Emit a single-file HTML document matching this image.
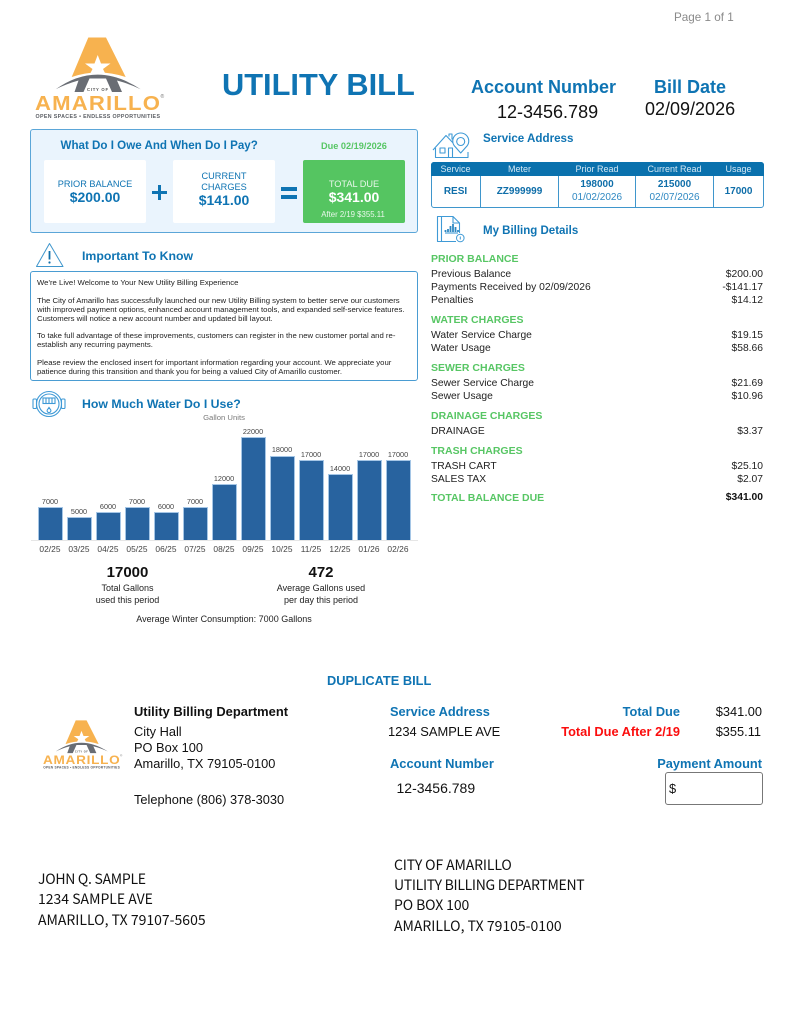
<!DOCTYPE html>
<html><head><meta charset="utf-8"><title>Utility Bill</title>
<style>
html,body{margin:0;padding:0;background:#fff}
#p{position:relative;width:791px;height:1024px;overflow:hidden;font-family:"Liberation Sans",Arial,sans-serif;color:#111;filter:blur(.3px)}
.t{position:absolute;white-space:nowrap;line-height:0}
.r{transform:translateX(-100%)}
.c{transform:translateX(-50%)}
.b{font-weight:700}
.bl{color:#0f74b3}
.g{color:#57c664;font-weight:700;font-size:10.5px;left:431px;margin-top:1px}
.d{font-size:10.3px;left:431px;color:#222;margin-top:1.5px}
.a{font-size:10.3px;left:763px;color:#222;transform:translateX(-100%);margin-top:1.5px}
.box{position:absolute;box-sizing:border-box}
.n{font-size:7.75px;left:37px;color:#222;margin-top:1px}
.th{font-size:9px;color:#d5e8f4;top:169px}
.tv{font-size:10px;color:#0f6ea9;font-weight:700}
.td{font-size:10px;color:#2f88c2}
.bar{position:absolute;width:25px;box-sizing:border-box;background:#28639f;border:1px solid #a5c6e6;border-bottom:0}
.v{font-size:7.3px;color:#444;margin-top:.5px}
.m{font-size:8.4px;color:#444;top:548.7px;letter-spacing:.05px}
.s{font-size:9px;color:#222}
.k{font-size:12.8px;color:#111}
.x{font-family:"Noto Sans CJK JP","Liberation Sans",sans-serif;font-size:14px;color:#111}
svg{position:absolute;left:0;top:0}
</style></head><body><div id="p">

<svg width="791" height="1024" viewBox="0 0 791 1024" fill="none">
  <!-- main logo -->
  <g>
    <path d="M88.3 37.5H106L125.7 77Q98 68 71.7 77Z" fill="#f7b24f"/>
    <path d="M97.7 55L101 63.5L110.5 63.5L103 69L106 75Q98 72.5 89.5 75L92.5 69L85 63.5L94.5 63.5Z" fill="#fff"/>
    <path d="M55.7 89.3Q97 60 140.7 89.3Q130 84 117 80.5L122 92H112L106 78.5H89.5L83.5 92H74.5L78.5 80.5Q66 84 55.7 89.3Z" fill="#696d74"/>
    <text x="87" y="91" font-size="4.2" font-weight="700" fill="#555" textLength="21" font-family="Liberation Sans">CITY OF</text>
    <text transform="translate(35 110) scale(1.08 1)" font-size="20.5" font-weight="700" fill="#f7b24f" textLength="115.7" font-family="Liberation Sans">AMARILLO</text>
    <text x="160.5" y="98" font-size="5" fill="#777" font-family="Liberation Sans">®</text>
    <text x="35.5" y="118" font-size="5.3" font-weight="700" fill="#5a5d63" textLength="124.5" font-family="Liberation Sans">OPEN SPACES • ENDLESS OPPORTUNITIES</text>
  </g>
  <!-- small logo -->
  <g transform="translate(21.5 697.9) scale(.614 .6)">
    <path d="M88.3 37.5H106L125.7 77Q98 68 71.7 77Z" fill="#f7b24f"/>
    <path d="M97.7 55L101 63.5L110.5 63.5L103 69L106 75Q98 72.5 89.5 75L92.5 69L85 63.5L94.5 63.5Z" fill="#fff"/>
    <path d="M55.7 89.3Q97 60 140.7 89.3Q130 84 117 80.5L122 92H112L106 78.5H89.5L83.5 92H74.5L78.5 80.5Q66 84 55.7 89.3Z" fill="#696d74"/>
    <text x="87" y="91" font-size="4.2" font-weight="700" fill="#555" textLength="21" font-family="Liberation Sans">CITY OF</text>
    <text transform="translate(35 110) scale(1.08 1)" font-size="20.5" font-weight="700" fill="#f7b24f" textLength="115.7" font-family="Liberation Sans">AMARILLO</text>
    <text x="160.5" y="98" font-size="5" fill="#777" font-family="Liberation Sans">®</text>
    <text x="35.5" y="118" font-size="5.3" font-weight="700" fill="#5a5d63" textLength="124.5" font-family="Liberation Sans">OPEN SPACES • ENDLESS OPPORTUNITIES</text>
  </g>
  <!-- warning icon -->
  <path d="M49.5 243.5L36.5 266.5H63Z" stroke="#3f96cc" stroke-width="1" stroke-linejoin="round"/>
  <path d="M49.5 251V259.5" stroke="#0f6ea9" stroke-width="1.8"/>
  <circle cx="49.5" cy="262.5" r="1.1" fill="#0f6ea9"/>
  <!-- meter icon -->
  <g stroke="#3f9ad6" stroke-width="1.1">
    <circle cx="49" cy="404" r="12.5"/><circle cx="49" cy="404" r="10"/>
    <rect x="43" y="398" width="12" height="5.5"/>
    <path d="M46 398v5.5M49 398v5.5M52 398v5.5"/>
    <rect x="33" y="399" width="3.5" height="9.5" rx="1"/><rect x="61.5" y="399" width="3.5" height="9.5" rx="1"/>
    <path d="M36.5 401h.5M36.5 406h.5M61 401h.5M61 406h.5"/>
    <path d="M49 407.5l1.8 2.6a1.9 1.9 0 1 1-3.6 0Z"/>
  </g>
  <!-- house icon -->
  <g stroke="#3f9ad6" stroke-width="1.1" stroke-linejoin="round">
    <path d="M433 150L446 135.5L456 146"/>
    <path d="M435.5 148V157.5H468V152"/>
    <path d="M449 136.5V134H452V139.5"/>
    <rect x="440" y="148" width="5" height="5"/>
    <path d="M448.5 157.5V148H452.5V157.5"/>
    <path d="M460.7 153L454.5 146A8 8 0 1 1 467 146Z" fill="#fff"/>
    <circle cx="460.7" cy="141.5" r="4"/>
  </g>
  <!-- document icon -->
  <g stroke="#3f9ad6" stroke-width="1.1" stroke-linejoin="round">
    <path d="M459.5 233V223L453 216.5H437.5V241.5H456"/>
    <path d="M441.5 216.5V241.5M453 216.5V223H459.5"/>
    <path d="M445 233H458"/>
  </g>
  <path d="M445.5 232v-2M448 232v-3M450.5 232v-6M453 232v-8M455.5 232v-5M458 232v-2" stroke="#2f88c2" stroke-width="1.8"/>
  <circle cx="460.3" cy="238" r="3.8" fill="#fff" stroke="#3f9ad6"/>
  <path d="M460.3 236.5v3" stroke="#3f9ad6"/>
  <!-- chart axis -->
  <path d="M31 540.5H418" stroke="#e6e6e6"/>
</svg>

<div class="t" style="left:674px;top:18px;font-size:11.7px;color:#8a8a8a">Page 1 of 1</div>
<div class="t b bl" style="left:222px;top:85px;font-size:30.8px">UTILITY BILL</div>
<div class="t b bl" style="left:471px;top:87px;font-size:18px">Account Number</div>
<div class="t b bl" style="left:654px;top:87px;font-size:18px">Bill Date</div>
<div class="t" style="left:497px;top:112px;font-size:18px">12-3456.789</div>
<div class="t" style="left:645px;top:109px;font-size:18px">02/09/2026</div>

<!-- owe box -->
<div class="box" style="left:30px;top:129px;width:388px;height:104px;background:#eaf4fd;border:1.5px solid #5ba6d8;border-radius:3px"></div>
<div class="t b bl" style="left:60.5px;top:146px;font-size:11.6px">What Do I Owe And When Do I Pay?</div>
<div class="t b" style="left:321px;top:146px;font-size:9.2px;color:#57c664">Due 02/19/2026</div>
<div class="box" style="left:44px;top:160px;width:102px;height:63px;background:#fff;border-radius:2px"></div>
<div class="box" style="left:173px;top:160px;width:102px;height:63px;background:#fff;border-radius:2px"></div>
<div class="box" style="left:303px;top:160px;width:102px;height:63px;background:#55c561;border-radius:2px"></div>
<div class="t c bl" style="left:95px;top:184px;font-size:9.2px">PRIOR BALANCE</div>
<div class="t c b bl" style="left:95px;top:197px;font-size:14px">$200.00</div>
<div class="t c bl" style="left:224px;top:176px;font-size:9.2px">CURRENT</div>
<div class="t c bl" style="left:224px;top:186.5px;font-size:9.2px">CHARGES</div>
<div class="t c b bl" style="left:224px;top:200px;font-size:14px">$141.00</div>
<div class="box" style="left:152px;top:190.5px;width:15px;height:3px;background:#0f74b3"></div>
<div class="box" style="left:158px;top:184.5px;width:3px;height:15.5px;background:#0f74b3"></div>
<div class="box" style="left:281px;top:187px;width:16px;height:4px;background:#0f74b3"></div>
<div class="box" style="left:281px;top:195px;width:16px;height:4px;background:#0f74b3"></div>
<div class="t c" style="left:354px;top:184px;font-size:9.2px;color:#e8f7ea">TOTAL DUE</div>
<div class="t c b" style="left:354px;top:197px;font-size:14px;color:#fff">$341.00</div>
<div class="t c" style="left:353px;top:215px;font-size:7.8px;color:#e8f7ea">After 2/19 $355.11</div>

<!-- important -->
<div class="t b bl" style="left:82px;top:255.5px;font-size:12.3px">Important To Know</div>
<div class="box" style="left:30px;top:271px;width:388px;height:110px;border:1.2px solid #4a9cd2;border-radius:3px"></div>
<div class="t n" style="top:281.5px">We're Live! Welcome to Your New Utility Billing Experience</div>
<div class="t n" style="top:299.5px">The City of Amarillo has successfully launched our new Utility Billing system to better serve our customers</div>
<div class="t n" style="top:308.5px">with improved payment options, enhanced account management tools, and expanded self-service features.</div>
<div class="t n" style="top:317.5px">Customers will notice a new account number and updated bill layout.</div>
<div class="t n" style="top:335px">To take full advantage of these improvements, customers can register in the new customer portal and re-</div>
<div class="t n" style="top:344px">establish any recurring payments.</div>
<div class="t n" style="top:361.5px">Please review the enclosed insert for important information regarding your account. We appreciate your</div>
<div class="t n" style="top:370.5px">patience during this transition and thank you for being a valued City of Amarillo customer.</div>

<!-- chart -->
<div class="t b bl" style="left:82px;top:404px;font-size:12.3px">How Much Water Do I Use?</div>
<div class="t c" style="left:224px;top:418px;font-size:7.7px;color:#7a7a7a">Gallon Units</div>

<div class="bar" style="left:37.5px;top:507px;height:33px"></div><div class="t c v" style="left:50px;top:501px">7000</div><div class="t c m" style="left:50px">02/25</div>
<div class="bar" style="left:66.5px;top:516.5px;height:23.5px"></div><div class="t c v" style="left:79px;top:511px">5000</div><div class="t c m" style="left:79px">03/25</div>
<div class="bar" style="left:95.5px;top:512px;height:28px"></div><div class="t c v" style="left:108px;top:506px">6000</div><div class="t c m" style="left:108px">04/25</div>
<div class="bar" style="left:124.5px;top:507px;height:33px"></div><div class="t c v" style="left:137px;top:501px">7000</div><div class="t c m" style="left:137px">05/25</div>
<div class="bar" style="left:153.5px;top:512px;height:28px"></div><div class="t c v" style="left:166px;top:506px">6000</div><div class="t c m" style="left:166px">06/25</div>
<div class="bar" style="left:182.5px;top:507px;height:33px"></div><div class="t c v" style="left:195px;top:501px">7000</div><div class="t c m" style="left:195px">07/25</div>
<div class="bar" style="left:211.5px;top:483.5px;height:56.5px"></div><div class="t c v" style="left:224px;top:478px">12000</div><div class="t c m" style="left:224px">08/25</div>
<div class="bar" style="left:240.5px;top:436.5px;height:103.5px"></div><div class="t c v" style="left:253px;top:431px">22000</div><div class="t c m" style="left:253px">09/25</div>
<div class="bar" style="left:269.5px;top:455.5px;height:84.5px"></div><div class="t c v" style="left:282px;top:449.5px">18000</div><div class="t c m" style="left:282px">10/25</div>
<div class="bar" style="left:298.5px;top:460px;height:80px"></div><div class="t c v" style="left:311px;top:454.5px">17000</div><div class="t c m" style="left:311px">11/25</div>
<div class="bar" style="left:327.5px;top:474px;height:66px"></div><div class="t c v" style="left:340px;top:468.5px">14000</div><div class="t c m" style="left:340px">12/25</div>
<div class="bar" style="left:356.5px;top:460px;height:80px"></div><div class="t c v" style="left:369px;top:454.5px">17000</div><div class="t c m" style="left:369px">01/26</div>
<div class="bar" style="left:385.5px;top:460px;height:80px"></div><div class="t c v" style="left:398px;top:454.5px">17000</div><div class="t c m" style="left:398px">02/26</div>

<div class="t c b" style="left:127.5px;top:573px;font-size:15px">17000</div>
<div class="t c s" style="left:127.5px;top:587.5px">Total Gallons</div>
<div class="t c s" style="left:127.5px;top:600px">used this period</div>
<div class="t c b" style="left:321px;top:573px;font-size:15px">472</div>
<div class="t c s" style="left:321px;top:587.5px">Average Gallons used</div>
<div class="t c s" style="left:321px;top:600px">per day this period</div>
<div class="t c s" style="left:224px;top:619px">Average Winter Consumption: 7000 Gallons</div>

<!-- right column -->
<div class="t b bl" style="left:483px;top:138.5px;font-size:11.6px">Service Address</div>
<div class="box" style="left:431px;top:161.5px;width:333px;height:46px;border:1.5px solid #3f96cc;border-radius:3px"></div>
<div class="box" style="left:431px;top:161.5px;width:333px;height:14.5px;background:#0a71ad;border-radius:3px 3px 0 0"></div>
<div class="box" style="left:480.3px;top:176px;width:1.2px;height:31px;background:#3f96cc"></div>
<div class="box" style="left:558px;top:176px;width:1.2px;height:31px;background:#3f96cc"></div>
<div class="box" style="left:635.3px;top:176px;width:1.2px;height:31px;background:#3f96cc"></div>
<div class="box" style="left:713px;top:176px;width:1.2px;height:31px;background:#3f96cc"></div>
<div class="t c th" style="left:455.5px">Service</div>
<div class="t c th" style="left:519.5px">Meter</div>
<div class="t c th" style="left:597px">Prior Read</div>
<div class="t c th" style="left:674.5px">Current Read</div>
<div class="t c th" style="left:738.5px">Usage</div>
<div class="t c tv" style="left:455.5px;top:191.5px">RESI</div>
<div class="t c tv" style="left:519.5px;top:191.5px">ZZ999999</div>
<div class="t c tv" style="left:597px;top:185px">198000</div>
<div class="t c td" style="left:597px;top:198px">01/02/2026</div>
<div class="t c tv" style="left:674.5px;top:185px">215000</div>
<div class="t c td" style="left:674.5px;top:198px">02/07/2026</div>
<div class="t c tv" style="left:738.5px;top:191.5px">17000</div>
<div class="t b bl" style="left:483px;top:230.5px;font-size:11.5px">My Billing Details</div>

<div class="t g" style="top:258px">PRIOR BALANCE</div>
<div class="t d" style="top:273.3px">Previous Balance</div><div class="t a" style="top:273.3px">$200.00</div>
<div class="t d" style="top:286.3px">Payments Received by 02/09/2026</div><div class="t a" style="top:286.3px">-$141.17</div>
<div class="t d" style="top:299px">Penalties</div><div class="t a" style="top:299px">$14.12</div>
<div class="t g" style="top:319px">WATER CHARGES</div>
<div class="t d" style="top:334px">Water Service Charge</div><div class="t a" style="top:334px">$19.15</div>
<div class="t d" style="top:347px">Water Usage</div><div class="t a" style="top:347px">$58.66</div>
<div class="t g" style="top:366.5px">SEWER CHARGES</div>
<div class="t d" style="top:382px">Sewer Service Charge</div><div class="t a" style="top:382px">$21.69</div>
<div class="t d" style="top:395px">Sewer Usage</div><div class="t a" style="top:395px">$10.96</div>
<div class="t g" style="top:414.5px">DRAINAGE CHARGES</div>
<div class="t d" style="top:430px">DRAINAGE</div><div class="t a" style="top:430px">$3.37</div>
<div class="t g" style="top:449.5px">TRASH CHARGES</div>
<div class="t d" style="top:465px">TRASH CART</div><div class="t a" style="top:465px">$25.10</div>
<div class="t d" style="top:478px">SALES TAX</div><div class="t a" style="top:478px">$2.07</div>
<div class="t g" style="top:497px">TOTAL BALANCE DUE</div><div class="t a b" style="top:496.5px;color:#111">$341.00</div>

<!-- remittance -->
<div class="t b bl" style="left:327px;top:681px;font-size:12.8px">DUPLICATE BILL</div>
<div class="t b k" style="left:134px;top:711.5px;font-size:12.9px">Utility Billing Department</div>
<div class="t k" style="left:134px;top:732px">City Hall</div>
<div class="t k" style="left:134px;top:747.5px">PO Box 100</div>
<div class="t k" style="left:134px;top:763.5px">Amarillo, TX 79105-0100</div>
<div class="t k" style="left:134px;top:800px">Telephone (806) 378-3030</div>
<div class="t b bl" style="left:390px;top:711.5px;font-size:12.8px">Service Address</div>
<div class="t k" style="left:388px;top:731.5px;font-size:12.9px">1234 SAMPLE AVE</div>
<div class="t b bl" style="left:390px;top:763.5px;font-size:12.9px">Account Number</div>
<div class="t" style="left:396.5px;top:787.5px;font-size:14px">12-3456.789</div>
<div class="t b bl r" style="left:680px;top:711.5px;font-size:12.8px">Total Due</div>
<div class="t b r" style="left:680px;top:731.5px;font-size:12.8px;color:#fb0d0d">Total Due After 2/19</div>
<div class="t k r" style="left:762px;top:711.5px">$341.00</div>
<div class="t k r" style="left:761px;top:731.5px">$355.11</div>
<div class="t b bl r" style="left:762px;top:763.5px;font-size:12.8px">Payment Amount</div>
<div class="box" style="left:664.5px;top:771.5px;width:98px;height:33px;border:1.3px solid #777;border-radius:3px"></div>
<div class="t k" style="left:669px;top:788.5px">$</div>

<div class="t x" style="left:38px;top:879px;letter-spacing:-.28px">JOHN Q. SAMPLE</div>
<div class="t x" style="left:38px;top:899px">1234 SAMPLE AVE</div>
<div class="t x" style="left:38px;top:920px">AMARILLO, TX 79107-5605</div>
<div class="t x" style="left:394px;top:865px;letter-spacing:-.12px">CITY OF AMARILLO</div>
<div class="t x" style="left:394px;top:885px;letter-spacing:-.3px">UTILITY BILLING DEPARTMENT</div>
<div class="t x" style="left:394px;top:905px;letter-spacing:-.1px">PO BOX 100</div>
<div class="t x" style="left:394px;top:926px">AMARILLO, TX 79105-0100</div>
</div></body></html>
